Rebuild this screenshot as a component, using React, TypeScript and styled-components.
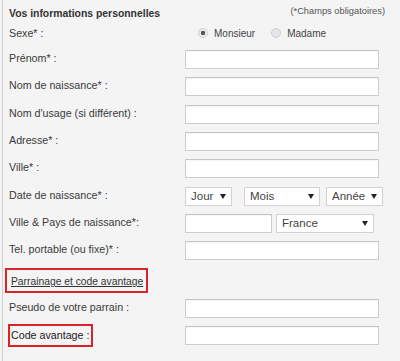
import React from 'react'
import styled, { createGlobalStyle } from 'styled-components'

const Global = createGlobalStyle`
  body {
    margin: 0;
    background: #f4f4f4;
    font-family: "Liberation Sans", Arial, sans-serif;
  }
`

const Panel = styled.div`
  width: 400px;
  height: 361px;
  box-sizing: border-box;
  margin-left: 2px;
  border-left: 1px solid #cfcfcf;
  padding-left: 6px;
  color: #3a3a3a;
  font-size: 10.7px;
  overflow: hidden;
`

const Header = styled.div`
  height: 22px;
  display: flex;
  align-items: flex-end;
  justify-content: space-between;
  padding-right: 17px;
  box-sizing: border-box;
  padding-bottom: 3px;
`

const Title = styled.h2`
  margin: 0;
  font-size: 10.4px;
  font-weight: bold;
  color: #333;
`

const Note = styled.span`
  font-size: 9.3px;
  color: #555;
  padding-bottom: 3px;
`

const Row = styled.div<{ h?: number }>`
  display: grid;
  grid-template-columns: 176px 1fr;
  align-items: center;
  height: ${(p) => p.h ?? 27.3}px;
`

const Label = styled.span`
  white-space: nowrap;
  padding-bottom: 3px;
`

const Field = styled.div`
  display: flex;
  align-items: center;
`

const Input = styled.div<{ w?: number }>`
  width: ${(p) => p.w ?? 194}px;
  height: 19px;
  box-sizing: border-box;
  background: #fff;
  border: 1px solid #cdcdcd;
  border-top-color: #c4c4c4;
  box-shadow: inset 0 1px 1px rgba(0, 0, 0, 0.04);
`

const Select = styled.div<{ w: number; gap?: number }>`
  width: ${(p) => p.w}px;
  height: 19px;
  margin-left: ${(p) => p.gap ?? 0}px;
  box-sizing: border-box;
  background: #fff;
  border: 1px solid #d2d2d2;
  display: flex;
  align-items: center;
  justify-content: space-between;
  padding: 0 5px 0 5px;
  font-size: 11.5px;
  color: #444;
  &::after {
    content: '';
    border-left: 3.5px solid transparent;
    border-right: 3.5px solid transparent;
    border-top: 5px solid #222;
  }
`

const Radios = styled.div`
  display: flex;
  align-items: center;
  padding-left: 13px;
  gap: 16px;
  padding-bottom: 2px;
`

const RadioItem = styled.label`
  display: flex;
  align-items: center;
  gap: 6px;
  font-size: 10px;
  color: #444;
`

const Dot = styled.span<{ on?: boolean }>`
  width: 10px;
  height: 10px;
  border-radius: 50%;
  box-sizing: border-box;
  border: 1px solid #cfcfcf;
  background: ${(p) => (p.on ? 'radial-gradient(circle, #555 0 2px, #ebebeb 2.5px)' : '#e6e6e6')};
`

const Section = styled.div`
  margin: 4px 0 1px -4px;
  width: 143px;
  height: 25px;
  box-sizing: border-box;
  border: 2px solid #d8232a;
  display: flex;
  align-items: flex-end;
  padding: 0 0 4px 4px;
`

const SectionLink = styled.span`
  text-decoration: underline;
  color: #333;
  white-space: nowrap;
  font-size: 10.3px;
`

const Boxed = styled.span`
  justify-self: start;
  margin-left: -1px;
  border: 2px solid #d8232a;
  padding: 3px 2px 4px 1px;
  white-space: nowrap;
  color: #222;
`

const fields = [
  'Prénom* :',
  'Nom de naissance* :',
  "Nom d'usage (si différent) :",
  'Adresse* :',
  'Ville* :',
]

export default function App() {
  return (
    <>
      <Global />
      <Panel>
        <Header>
          <Title>Vos informations personnelles</Title>
          <Note>(*Champs obligatoires)</Note>
        </Header>
        <Row h={24}>
          <Label>Sexe* :</Label>
          <Radios>
            <RadioItem>
              <Dot on />
              Monsieur
            </RadioItem>
            <RadioItem>
              <Dot />
              Madame
            </RadioItem>
          </Radios>
        </Row>
        {fields.map((f) => (
          <Row key={f}>
            <Label>{f}</Label>
            <Field>
              <Input />
            </Field>
          </Row>
        ))}
        <Row>
          <Label>Date de naissance* :</Label>
          <Field>
            <Select w={47}>Jour</Select>
            <Select w={76} gap={12}>Mois</Select>
            <Select w={57} gap={6}>Année</Select>
          </Field>
        </Row>
        <Row>
          <Label>Ville &amp; Pays de naissance*:</Label>
          <Field>
            <Input w={87} />
            <Select w={98} gap={4}>France</Select>
          </Field>
        </Row>
        <Row>
          <Label>Tel. portable (ou fixe)* :</Label>
          <Field>
            <Input />
          </Field>
        </Row>
        <Section>
          <SectionLink>Parrainage et code avantage</SectionLink>
        </Section>
        <Row>
          <Label>Pseudo de votre parrain :</Label>
          <Field>
            <Input />
          </Field>
        </Row>
        <Row>
          <Boxed>Code avantage :</Boxed>
          <Field>
            <Input />
          </Field>
        </Row>
      </Panel>
    </>
  )
}
